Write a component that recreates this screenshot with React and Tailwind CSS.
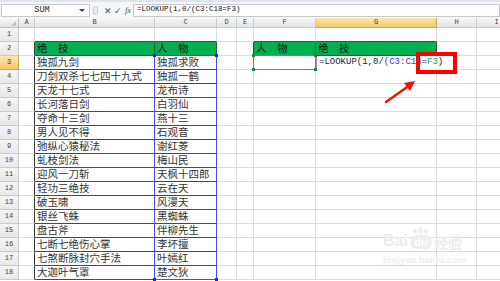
import React from 'react';

const cols = [
  { k: 'A', w: 'w-[16px]' },
  { k: 'B', w: 'w-[120px]' },
  { k: 'C', w: 'w-[62px]' },
  { k: 'D', w: 'w-[20px]' },
  { k: 'E', w: 'w-[17px]' },
  { k: 'F', w: 'w-[62px]' },
  { k: 'G', w: 'w-[121px]' },
  { k: 'H', w: 'w-[40px]' },
  { k: 'I', w: 'w-[40px]' },
  { k: 'J', w: 'w-[40px]' },
];

const rows = [
  ['独孤九剑', '独孤求败'],
  ['刀剑双杀七七四十九式', '独孤一鹤'],
  ['天龙十七式', '龙布诗'],
  ['长河落日剑', '白羽仙'],
  ['夺命十三剑', '燕十三'],
  ['男人见不得', '石观音'],
  ['弛纵心猿秘法', '谢红菱'],
  ['虬枝剑法', '梅山民'],
  ['迎风一刀斩', '天枫十四郎'],
  ['轻功三绝技', '云在天'],
  ['破玉啸', '风漫天'],
  ['银丝飞蛛', '黑蜘蛛'],
  ['盘古斧', '伴柳先生'],
  ['七断七绝伤心掌', '李坏擅'],
  ['七煞断脉封穴手法', '叶嫣红'],
  ['大迦叶气罩', '楚文狄'],
];

const cjk = { fontFamily: '"Noto Sans CJK SC", "Noto Sans", sans-serif' };
const mono = { fontFamily: '"Liberation Mono", "DejaVu Sans Mono", monospace' };
const sans = { fontFamily: '"Liberation Sans", Arial, sans-serif' };

function FormulaBar() {
  return (
    <div className="h-[18px] bg-[#f4f6f8] border-t-2 border-[#dfe4ea] flex items-center pl-[1px]">
      <div className="w-[89px] h-[13px] bg-white border border-[#c6cbd1] flex items-center relative shrink-0">
        <span className="w-[80px] text-center text-[8.5px] text-[#222]" style={mono}>SUM</span>
        <span className="absolute right-[4px] top-[4px] w-0 h-0 border-l-[3px] border-r-[3px] border-t-[3px] border-l-transparent border-r-transparent border-t-[#444]"></span>
      </div>
      <div className="w-[43px] shrink-0 flex items-center text-[#555]">
        <div className="ml-[3px] w-[5px] h-[9px] rounded-full border border-[#c8c8c8] bg-[#eeeeee]"></div>
        <span className="ml-[6px] text-[9px] leading-none">✕</span>
        <span className="ml-[2px] text-[9px] leading-none">✓</span>
        <span className="ml-[3px] text-[8.5px] leading-none italic" style={{ fontFamily: '"Liberation Serif", serif' }}>fx</span>
      </div>
      <div className="flex-1 h-[13px] bg-white border border-[#c6cbd1] flex items-center pl-[3px]">
        <span className="text-[7.5px] text-[#111]" style={mono}>=LOOKUP(1,0/(C3:C18=F3)</span>
      </div>
    </div>
  );
}

function HeaderRow() {
  return (
    <div className="flex h-[10px]">
      <div className="w-[19px] shrink-0 bg-gradient-to-b from-[#f7f7f7] to-[#e4e4e4] border-r border-b border-[#bfc3c8] flex items-end justify-end pr-[2px] pb-[1px]">
        <svg width="5" height="5" viewBox="0 0 5 5">
          <polygon points="5,0 5,5 0,5" fill="#c4c4c4" />
        </svg>
      </div>
      {cols.map((c) => (
        <div
          key={c.k}
          className={`${c.w} shrink-0 border-r border-b flex items-center justify-center text-[7px] leading-none ${
            c.k === 'G'
              ? 'bg-gradient-to-b from-[#fbe8a8] to-[#f4c962] border-[#c9a75a] text-[#333]'
              : 'bg-gradient-to-b from-[#f7f7f7] to-[#e4e4e4] border-[#c8ccd0] text-[#444]'
          }`}
          style={mono}
        >
          {c.k}
        </div>
      ))}
    </div>
  );
}

function cellClass(r, k) {
  const inTable = k === 'B' || k === 'C';
  const inRight = k === 'F' || k === 'G';
  if (r === 2 && (inTable || inRight)) return 'bg-[#00b050] border-[#2b5c3a]';
  if (r >= 3 && r <= 18 && inTable) return 'bg-white border-[#4a4a4a]';
  if (r === 1 && (inTable || inRight)) return 'bg-white border-r-[#dadcdd] border-b-[#2b5c3a]';
  if (k === 'A' && r >= 2 && r <= 18) return 'bg-white border-r-[#3a3a3a] border-b-[#dadcdd]';
  if (k === 'E' && r === 2) return 'bg-white border-r-[#2b5c3a] border-b-[#dadcdd]';
  return 'bg-white border-[#dadcdd]';
}

function Cell({ r, c }) {
  const item = r >= 3 && r <= 18 ? rows[r - 3] : null;
  let content = null;
  if (r === 2 && c.k === 'B') content = <span className="pl-[2px] text-[#111]">绝　技</span>;
  if (r === 2 && c.k === 'C') content = <span className="pl-[2px] text-[#111]">人　物</span>;
  if (r === 2 && c.k === 'F') content = <span className="pl-[2px] text-[#111]">人　物</span>;
  if (r === 2 && c.k === 'G') content = <span className="pl-[2px] text-[#111]">绝　技</span>;
  if (item && c.k === 'B') content = <span className="pl-[2px] text-[#333]">{item[0]}</span>;
  if (item && c.k === 'C') content = <span className="pl-[2px] text-[#333]">{item[1]}</span>;
  return (
    <div
      className={`${c.w} shrink-0 border-r border-b flex items-center overflow-visible whitespace-nowrap text-[10.5px] leading-none ${cellClass(r, c.k)}`}
      style={cjk}
    >
      {content}
    </div>
  );
}

function Row({ r }) {
  return (
    <div className="flex h-[14px] relative">
      <div
        className={`w-[19px] shrink-0 border-r border-b flex items-center justify-center text-[7px] leading-none ${
          r === 3
            ? 'bg-gradient-to-b from-[#fbe8a8] to-[#f4c962] border-[#c9a75a] text-[#333]'
            : 'bg-gradient-to-b from-[#f5f5f5] to-[#e8e8e8] border-[#c8ccd0] text-[#444]'
        }`}
        style={mono}
      >
        {r}
      </div>
      {cols.map((c) => (
        <Cell key={c.k} r={r} c={c} />
      ))}
    </div>
  );
}

function Corner({ className }) {
  return <span className={`absolute w-[3px] h-[3px] ${className}`}></span>;
}

export default function App() {
  const rowNums = Array.from({ length: 18 }, (_, i) => i + 1);
  return (
    <div className="w-[500px] h-[281px] overflow-hidden bg-white relative select-none">
      <FormulaBar />
      <HeaderRow />
      <div className="relative">
        {rowNums.map((r) => (
          <Row key={r} r={r} />
        ))}

        {/* G3 in edit mode, text spills into H */}
        <div className="absolute left-[316px] top-[28px] h-[14px] w-[143px] bg-white border-l border-[#d070d0] flex items-center pl-[2px] z-10">
          <span className="text-[9px] whitespace-nowrap text-[#222]" style={mono}>
            =LOOKUP(1,0/<span className="text-[#3a3ad8]">(C3:C18</span>=<span className="text-[#2e9e48]">F3</span>)
          </span>
        </div>

        {/* C3:C18 blue range */}
        <div className="absolute left-[154px] top-[27px] w-[63px] h-[225px] border border-[#4848ff] z-10 pointer-events-none">
          <Corner className="bg-[#2020ff] -left-[2px] -top-[2px]" />
          <Corner className="bg-[#2020ff] -right-[2px] -top-[2px]" />
          <Corner className="bg-[#2020ff] -left-[2px] -bottom-[2px]" />
          <Corner className="bg-[#2020ff] -right-[2px] -bottom-[2px]" />
        </div>

        {/* F3 green range */}
        <div className="absolute left-[253px] top-[27px] w-[63px] h-[15px] border border-[#3aa655] z-10 pointer-events-none">
          <Corner className="bg-[#1e8a3a] -left-[2px] -top-[2px]" />
          <Corner className="bg-[#1e8a3a] -right-[2px] -top-[2px]" />
          <Corner className="bg-[#1e8a3a] -left-[2px] -bottom-[2px]" />
          <Corner className="bg-[#1e8a3a] -right-[2px] -bottom-[2px]" />
        </div>

        {/* red annotation box */}
        <div className="absolute left-[416px] top-[24px] w-[41px] h-[22px] border-[4px] border-[#ff0000] z-20"></div>

        {/* red arrow */}
        <svg className="absolute left-[380px] top-[50px] z-20" width="40" height="30" viewBox="0 0 40 30">
          <line x1="6" y1="24" x2="30" y2="7" stroke="#ee1111" strokeWidth="2.4" strokeLinecap="round" />
          <polygon points="35,3 24,5 30,13" fill="#ee1111" />
        </svg>

        {/* watermark */}
        <div className="absolute left-[383px] top-[199px] z-20 flex flex-col items-start text-[#ececec] leading-none">
          <div className="flex items-end gap-[2px]">
            <span className="text-[16px] font-bold" style={sans}>Bai</span>
            <span className="flex flex-col items-center">
              <span className="flex gap-[1px] mb-[1px] items-end">
                <span className="w-[4px] h-[5px] rounded-full bg-[#eeeeee]"></span>
                <span className="w-[5px] h-[7px] rounded-full bg-[#eeeeee]"></span>
                <span className="w-[4px] h-[5px] rounded-full bg-[#eeeeee]"></span>
              </span>
              <span className="w-[22px] h-[14px] rounded-[7px] bg-[#eeeeee] text-white text-[11px] font-bold flex items-center justify-center" style={sans}>du</span>
            </span>
            <span className="text-[14px] font-bold" style={cjk}>经验</span>
          </div>
          <span className="mt-[6px] text-[9.5px] font-bold text-[#eeeeee]" style={sans}>jingyan.baidu.com</span>
        </div>
      </div>
    </div>
  );
}
